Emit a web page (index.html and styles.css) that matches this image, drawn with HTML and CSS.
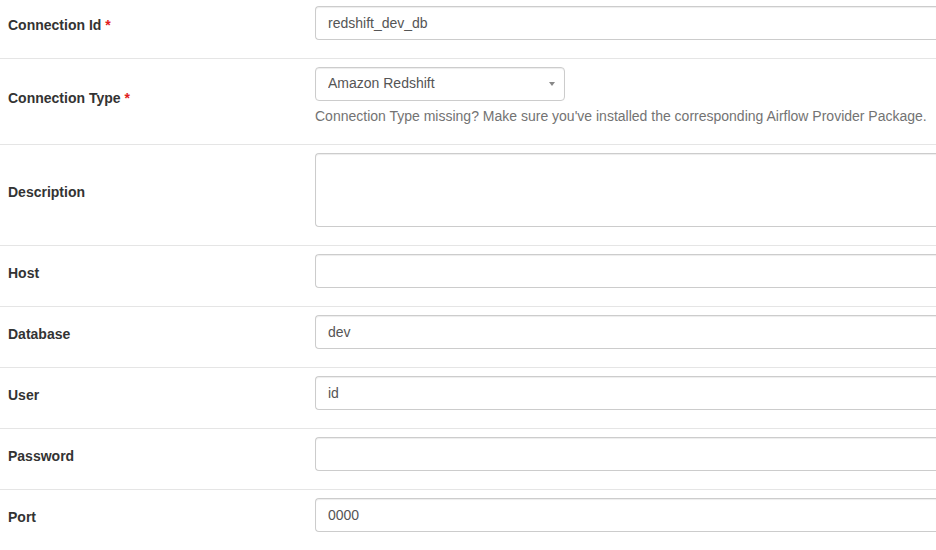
FILE: index.html
```html
<!DOCTYPE html>
<html lang="en">
<head>
<meta charset="utf-8">
<title>Edit Connection</title>
<link rel="stylesheet" href="styles.css">
</head>
<body>
<form class="conn-form">
  <table class="form-table">
    <colgroup><col class="col-label"><col class="col-field"></colgroup>
    <tbody>
      <tr class="first">
        <th><label>Connection Id <span class="req">*</span></label></th>
        <td><input class="form-control" type="text" value="redshift_dev_db"><p class="help-block"></p></td>
      </tr>
      <tr>
        <th><label>Connection Type <span class="req">*</span></label></th>
        <td>
          <div class="select2"><span class="select2-text">Amazon Redshift</span><span class="select2-arrow"></span></div>
          <p class="help-block">Connection Type missing? Make sure you've installed the corresponding Airflow Provider Package.</p>
        </td>
      </tr>
      <tr>
        <th><label>Description</label></th>
        <td><textarea class="form-control textarea"></textarea><p class="help-block"></p></td>
      </tr>
      <tr>
        <th><label>Host</label></th>
        <td><input class="form-control" type="text" value=""><p class="help-block"></p></td>
      </tr>
      <tr>
        <th><label>Database</label></th>
        <td><input class="form-control" type="text" value="dev"><p class="help-block"></p></td>
      </tr>
      <tr>
        <th><label>User</label></th>
        <td><input class="form-control" type="text" value="id"><p class="help-block"></p></td>
      </tr>
      <tr>
        <th><label>Password</label></th>
        <td><input class="form-control" type="password" value=""><p class="help-block"></p></td>
      </tr>
      <tr>
        <th><label>Port</label></th>
        <td><input class="form-control" type="text" value="0000"><p class="help-block"></p></td>
      </tr>
    </tbody>
  </table>
</form>
</body>
</html>
```
FILE: styles.css
```css
html, body {
  margin: 0;
  padding: 0;
  overflow: hidden;
  background: #fff;
}
body {
  font-family: "Liberation Sans", Arial, Helvetica, sans-serif;
  font-size: 14px;
  line-height: 20px;
  color: #333;
}
.conn-form {
  margin: 0;
}
.form-table {
  width: 100%;
  border-collapse: collapse;
  border-spacing: 0;
  table-layout: fixed;
}
.col-label { width: 307px; }
.form-table th,
.form-table td {
  padding: 8px;
  border-top: 1px solid #e5e5e5;
  vertical-align: middle;
  text-align: left;
}
.form-table td {
  padding-right: 0;
}
.form-table tr.first th,
.form-table tr.first td {
  border-top: none;
  padding-top: 6px;
}
.form-table th label {
  display: inline-block;
  margin-bottom: 7px;
  font-weight: 700;
  color: #333;
}
.req {
  color: #e02020;
}
.form-control {
  display: block;
  box-sizing: border-box;
  width: 100%;
  height: 34px;
  margin: 0;
  padding: 6px 12px;
  font-family: inherit;
  font-size: 14px;
  line-height: 20px;
  color: #555;
  background: #fff;
  border: 1px solid #ccc;
  border-right: none;
  border-radius: 4px 0 0 4px;
  box-shadow: inset 0 1px 1px rgba(0,0,0,.075);
  outline: none;
}
.textarea {
  height: 74px;
  resize: none;
}
.help-block {
  display: block;
  margin: 5px 0 10px;
  color: #737373;
  white-space: nowrap;
}
.select2 {
  position: relative;
  box-sizing: border-box;
  width: 250px;
  height: 34px;
  padding: 5px 24px 7px 12px;
  border: 1px solid #ccc;
  border-radius: 4px;
  background: #fff;
  color: #555;
  box-shadow: inset 0 1px 1px rgba(0,0,0,.075);
}
.select2-text {
  display: block;
  white-space: nowrap;
  overflow: hidden;
}
.select2-arrow {
  position: absolute;
  right: 9px;
  top: 14px;
  width: 0;
  height: 0;
  border-style: solid;
  border-width: 4px 3px 0 3px;
  border-color: #888 transparent transparent transparent;
}
```
